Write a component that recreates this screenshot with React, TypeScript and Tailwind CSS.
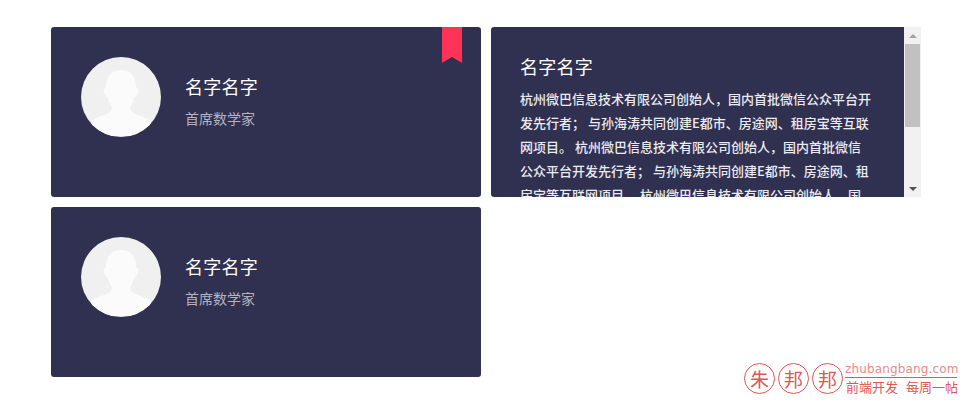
const FONT = "font-['Microsoft_YaHei','Noto_Sans_CJK_SC',sans-serif]";

const BIO =
  '杭州微巴信息技术有限公司创始人，国内首批微信公众平台开发先行者； 与孙海涛共同创建E都市、房途网、租房宝等互联网项目。 杭州微巴信息技术有限公司创始人，国内首批微信公众平台开发先行者； 与孙海涛共同创建E都市、房途网、租房宝等互联网项目。 杭州微巴信息技术有限公司创始人，国内首批微信公众平台开发先行者；';

function Avatar() {
  return (
    <div className="w-20 h-20 rounded-full bg-[#f0f0f0] overflow-hidden shrink-0">
      <svg viewBox="0 0 80 80" className="w-full h-full">
        <path
          d="M25 30c0-11 6-17 15-17s15 6 15 17c2 1 3 3 2 6-1 2-2 4-4 5-1 4-2 7-4 9 0 3 2 6 8 8 5 2 9 3 13 6v15H10V64c4-3 8-4 13-6 6-2 8-5 8-8-2-2-3-5-4-9-2-1-3-3-4-5-1-3 0-5 2-6z"
          fill="#fbfbfb"
        />
      </svg>
    </div>
  );
}

function ProfileCard({ bookmark }: { bookmark?: boolean }) {
  return (
    <div className="relative w-[430px] h-[170px] rounded-[3px] bg-[#303050] flex items-start pt-[30px] pl-[30px]">
      <Avatar />
      <div className="ml-6 pt-[14px]">
        <div className="text-[18px] tracking-[0.25px] leading-[30px] text-white">名字名字</div>
        <div className="mt-[2px] text-[14px] leading-[30px] text-[#b4b4c0]">首席数学家</div>
      </div>
      {bookmark && (
        <svg viewBox="0 0 20 36" className="absolute top-0 right-[19px] w-5 h-9">
          <path d="M0 0h20v36l-10-6-10 6z" fill="#ff3358" />
        </svg>
      )}
    </div>
  );
}

function BioCard() {
  return (
    <div className="w-[430px] h-[170px] rounded-l-[3px] overflow-hidden bg-[#303050] flex">
      <div className="flex-1 min-w-0 pl-[29px] pr-[32px] pt-[25px] overflow-hidden">
        <div className="text-[18px] tracking-[0.25px] leading-[30px] -mt-[1px] text-white">名字名字</div>
        <p className="mt-[6px] text-[13px] leading-[24px] font-medium text-[#ececf0]">{BIO}</p>
      </div>
      <div className="w-[17px] bg-[#f1f1f1] flex flex-col items-center shrink-0">
        <div className="h-[17px] flex items-center justify-center">
          <div className="w-0 h-0 border-x-[4px] border-x-transparent border-b-[4px] border-b-[#a3a3a3]" />
        </div>
        <div className="w-[15px] h-[83px] bg-[#c1c1c1]" />
        <div className="flex-1" />
        <div className="h-[17px] flex items-center justify-center">
          <div className="w-0 h-0 border-x-[4px] border-x-transparent border-t-[4px] border-t-[#505050]" />
        </div>
      </div>
    </div>
  );
}

function Seal({ ch }: { ch: string }) {
  return (
    <div className="w-[31px] h-[31px] rounded-full border border-[#e05555] flex items-center justify-center text-[19px] leading-none text-[#e05555]">
      {ch}
    </div>
  );
}

function Watermark() {
  return (
    <div className="absolute right-[13px] bottom-[14px] flex items-center gap-[3px]">
      <Seal ch="朱" />
      <Seal ch="邦" />
      <Seal ch="邦" />
      <div className="w-[112px] -ml-[1px]">
        <div className="text-[12px] leading-[14px] tracking-[0.15px] text-[#e78a8a] font-['DejaVu_Sans',sans-serif] whitespace-nowrap">
          zhubangbang.com
        </div>
        <div className="border-t border-[#e05555] mt-[1px] pl-[1px] pt-[1px] text-[13px] leading-[16px] text-[#e05555] whitespace-nowrap">
          前端开发<span className="ml-[8px]">每周一帖</span>
        </div>
      </div>
    </div>
  );
}

export default function App() {
  return (
    <div className={`relative w-[970px] h-[409px] bg-white overflow-hidden pt-[27px] pl-[51px] ${FONT}`}>
      <div className="grid grid-cols-[430px_430px] gap-[10px]">
        <ProfileCard bookmark />
        <BioCard />
        <ProfileCard />
      </div>
      <Watermark />
    </div>
  );
}
